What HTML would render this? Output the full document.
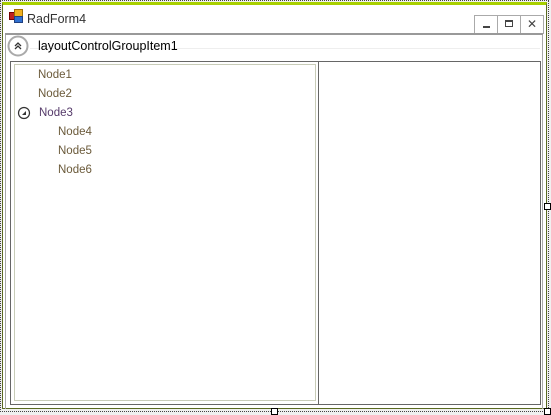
<!DOCTYPE html>
<html><head><style>
body{margin:0;width:551px;height:415px;background:#f0f0f0;position:relative;overflow:hidden;font-family:"Liberation Sans",sans-serif;}
div{position:absolute;box-sizing:border-box;}
.h{width:7px;height:7px;background:#fff;border:1px solid #000;}
.t{font-size:11.5px;color:#6b5a3a;}
</style></head><body>
<div style="left:0;top:0;width:549px;height:412px;border:1px dotted #444;"></div>
<div style="left:2px;top:2px;width:545px;height:407px;background:#fff;border:1px solid #5a6a20;border-top:3px solid #a8d000;"></div>
<div style="left:9px;top:12px;width:6px;height:8px;background:#c02020;border:1px solid #700;"></div>
<div style="left:14px;top:9px;width:9px;height:8px;background:#f0b020;border:1px solid #a07000;"></div>
<div style="left:14px;top:16px;width:9px;height:7px;background:#3070d0;border:1px solid #204080;"></div>
<div style="left:27px;top:12px;font-size:12.5px;color:#333;">RadForm4</div>
<div style="left:474px;top:15px;width:24px;height:19px;border:1px solid #aaa;background:#fff;"><div style="left:8px;top:10px;width:7px;height:2px;background:#444"></div></div>
<div style="left:497px;top:15px;width:24px;height:19px;border:1px solid #aaa;background:#fff;"><div style="left:7px;top:4px;width:8px;height:7px;border:1px solid #444;border-top:2px solid #444"></div></div>
<div style="left:520px;top:15px;width:24px;height:19px;border:1px solid #aaa;background:#fff;font-size:12px;color:#444;text-align:center;line-height:16px;">✕</div>
<div style="left:5px;top:33px;width:538px;height:2px;background:#999;"></div>
<div style="left:5px;top:35px;width:538px;height:374px;border-left:1px solid #aaa;border-right:1px solid #aaa;"></div>
<div style="left:30px;top:48px;width:510px;height:1px;background:#eee;"></div>
<svg style="position:absolute;left:7px;top:35px" width="22" height="22"><circle cx="11" cy="11" r="9.5" fill="#fff" stroke="#aaa" stroke-width="2"/><path d="M8 11 L11 8 L14 11 M8 14 L11 11 L14 14" fill="none" stroke="#333" stroke-width="1.3"/></svg>
<div style="left:38px;top:39px;font-size:12.5px;color:#000;">layoutControlGroupItem1</div>
<div style="left:10px;top:61px;width:531px;height:344px;border:1px solid #666;"></div>
<div style="left:14px;top:64px;width:302px;height:337px;border:1px solid #c8ccb8;"></div>
<div style="left:318px;top:62px;width:1px;height:342px;background:#666;"></div>
<div class="t" style="left:38px;top:69px;">Node1</div>
<div class="t" style="left:38px;top:88px;">Node2</div>
<svg style="position:absolute;left:17px;top:106px" width="14" height="14"><circle cx="7" cy="7" r="5.5" fill="none" stroke="#333" stroke-width="1.2"/><path d="M5 9 L9 9 L9 5 Z" fill="#333"/></svg>
<div class="t" style="left:39px;top:107px;color:#553a6a">Node3</div>
<div class="t" style="left:58px;top:126px;">Node4</div>
<div class="t" style="left:58px;top:145px;">Node5</div>
<div class="t" style="left:58px;top:164px;">Node6</div>
<div class="h" style="left:544px;top:203px;"></div>
<div class="h" style="left:271px;top:408px;"></div>
<div class="h" style="left:544px;top:408px;"></div>
</body></html>
